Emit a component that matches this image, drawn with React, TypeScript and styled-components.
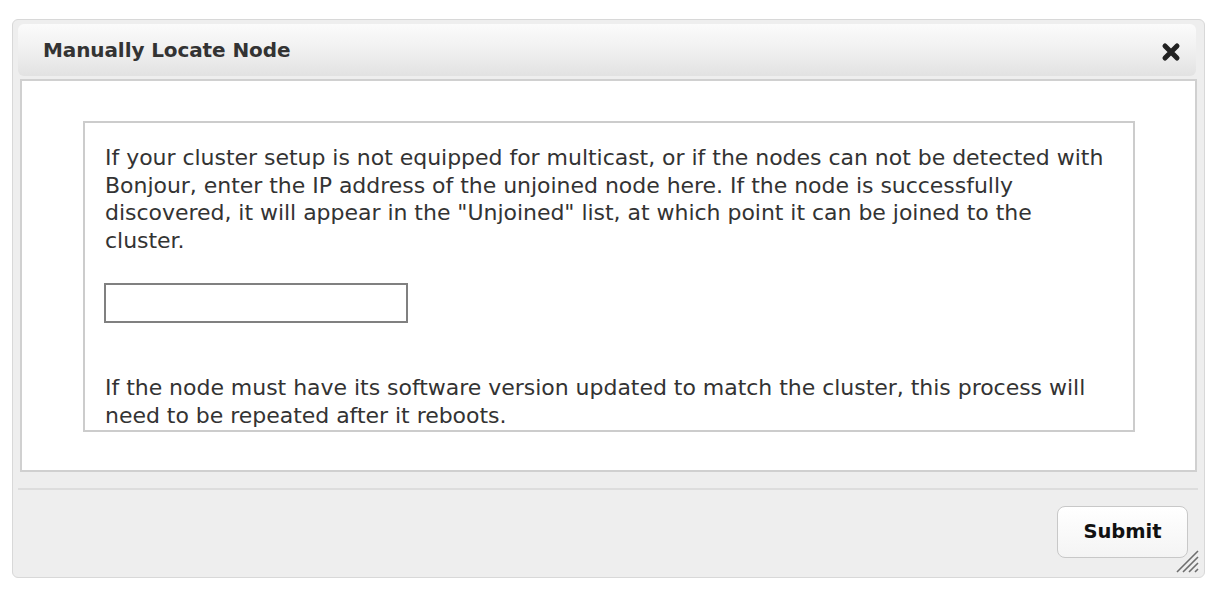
import React from "react";
import styled, { createGlobalStyle } from "styled-components";

const GlobalStyle = createGlobalStyle`
  html, body { margin: 0; padding: 0; background: #ffffff; }
  body { font-family: "DejaVu Sans", Verdana, sans-serif; }
  * { box-sizing: border-box; }
`;

const Page = styled.div`
  width: 1229px;
  height: 595px;
  padding: 19px 0 0 12px;
`;

const Dialog = styled.div`
  position: relative;
  width: 1193px;
  height: 559px;
  border: 1px solid #d8d8d8;
  border-radius: 6px;
  background: #eeeeee;
  padding: 4px 8px 0 5px;
  display: flex;
  flex-direction: column;
`;

const TitleBar = styled.div`
  height: 52px;
  border-radius: 6px;
  background: linear-gradient(to bottom, #fbfbfb 0%, #f0f0f0 50%, #e2e2e2 100%);
  display: flex;
  align-items: center;
  justify-content: space-between;
  padding: 0 14px 0 25px;
`;

const Title = styled.span`
  font-family: "DejaVu Sans", Verdana, sans-serif;
  font-weight: bold;
  font-size: 20px;
  color: #333333;
  letter-spacing: -0.1px;
`;

const CloseButton = styled.button`
  border: none;
  background: transparent;
  padding: 0;
  margin-top: 4px;
  width: 22px;
  height: 22px;
  display: flex;
  align-items: center;
  justify-content: center;
  cursor: pointer;
`;

const Content = styled.div`
  margin: 3px -1px 0 2px;
  height: 393px;
  background: #ffffff;
  border: 2px solid #d0d0d0;
  padding: 40px 60px 0 61px;
`;

const InfoBox = styled.div`
  height: 311px;
  border: 2px solid #cccccc;
  padding: 21px 20px 0 20px;
  overflow: hidden;
`;

const Paragraph = styled.p<{ $gap?: number }>`
  margin: 0 0 ${(p) => p.$gap ?? 0}px 0;
  font-family: "DejaVu Sans", Verdana, sans-serif;
  font-size: 22px;
  line-height: 27.7px;
  color: #333333;
  letter-spacing: -0.03px;
`;

const AddressInput = styled.input`
  display: block;
  width: 304px;
  height: 40px;
  margin: 0 0 51px -1px;
  border: 2px solid #808080;
  background: #ffffff;
  outline: none;
  font-size: 18px;
  padding: 0 6px;
`;

const Footer = styled.div`
  margin: 16px -2px 0 0;
  border-top: 2px solid #dddddd;
  display: flex;
  justify-content: flex-end;
  padding: 16px 10px 0 0;
`;

const SubmitButton = styled.button`
  width: 131px;
  height: 52px;
  border: 1px solid #c8c8c8;
  border-radius: 8px;
  background: linear-gradient(to bottom, #ffffff 0%, #f4f4f4 100%);
  font-family: "DejaVu Sans", Verdana, sans-serif;
  font-weight: bold;
  font-size: 19.5px;
  color: #111111;
  cursor: pointer;
  padding: 0 0 1px 0;
`;

const ResizeGrip = styled.svg`
  position: absolute;
  right: 5px;
  bottom: 4px;
`;

export default function App() {
  return (
    <>
      <GlobalStyle />
      <Page>
        <Dialog>
          <TitleBar>
            <Title>Manually Locate Node</Title>
            <CloseButton aria-label="close">
              <svg width="22" height="22" viewBox="0 0 22 22">
                <path
                  d="M5 5 L17 17 M17 5 L5 17"
                  stroke="#222222"
                  strokeWidth="5"
                  strokeLinecap="round"
                />
              </svg>
            </CloseButton>
          </TitleBar>
          <Content>
            <InfoBox>
              <Paragraph $gap={28}>
                If your cluster setup is not equipped for multicast, or if the nodes can not be detected with
                Bonjour, enter the IP address of the unjoined node here. If the node is successfully
                discovered, it will appear in the "Unjoined" list, at which point it can be joined to the
                cluster.
              </Paragraph>
              <AddressInput type="text" />
              <Paragraph>
                If the node must have its software version updated to match the cluster, this process will
                need to be repeated after it reboots.
              </Paragraph>
            </InfoBox>
          </Content>
          <Footer>
            <SubmitButton>Submit</SubmitButton>
          </Footer>
          <ResizeGrip width="24" height="24" viewBox="0 0 24 24">
            <path
              d="M23 2 L2 23 M23 8 L8 23 M23 14 L14 23 M23 20 L20 23"
              stroke="#6e6e6e"
              strokeWidth="1.6"
            />
          </ResizeGrip>
        </Dialog>
      </Page>
    </>
  );
}
